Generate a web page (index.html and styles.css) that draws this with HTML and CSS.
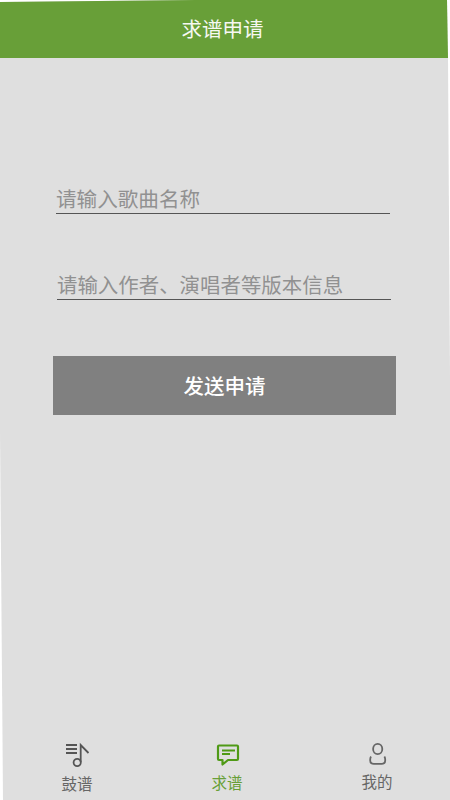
FILE: index.html
```html
<!DOCTYPE html>
<html lang="zh">
<head>
<meta charset="utf-8">
<title>求谱申请</title>
<link rel="stylesheet" href="styles.css">
</head>
<body>
<div class="app">
  <header class="topbar">求谱申请</header>
  <main class="form">
    <div class="field field-one">请输入歌曲名称</div>
    <div class="field field-two">请输入作者、演唱者等版本信息</div>
    <div class="submit">发送申请</div>
  </main>
  <nav class="tabs">
    <div class="tab">
      <svg class="icon" viewBox="0 0 24 24" fill="none" stroke="#555" stroke-width="1.8">
        <path d="M1 2h11M1 6h11M1 10h11"/>
        <path d="M15.700 19V2l7.800 8"/>
        <circle cx="12.200" cy="19.500" r="3.600"/>
      </svg>
      <span class="label">鼓谱</span>
    </div>
    <div class="tab tab-active">
      <svg class="icon" viewBox="0 0 24 24" fill="none" stroke="#4f9a16" stroke-width="2.2">
        <path d="M4 2.500h18a1 1 0 0 1 1 1V16a1 1 0 0 1-1 1H13l-5.500 4.500V17H4a1 1 0 0 1-1-1V3.500a1 1 0 0 1 1-1z" stroke-linejoin="round"/>
        <path d="M7 7.500h13M7 11h8" stroke-width="1.800"/>
      </svg>
      <span class="label">求谱</span>
    </div>
    <div class="tab tab-me">
      <svg class="icon" viewBox="0 0 24 24" fill="none" stroke="#666" stroke-width="1.800">
        <ellipse cx="12.700" cy="6" rx="4.600" ry="5.200"/>
        <path d="M6 13.500C5 15 5.200 16 5.200 17.500c0 2.200 1.500 3.300 3.500 3.300h8c2 0 3.500-1.100 3.500-3.300 0-1.500.2-2.500-.8-4"/>
      </svg>
      <span class="label">我的</span>
    </div>
  </nav>
</div>
</body>
</html>
```
FILE: styles.css
```css
* { box-sizing: border-box; }
html, body { margin: 0; padding: 0; }
body {
  width: 450px;
  height: 800px;
  overflow: hidden;
  background: #fff;
  font-family: "Noto Sans CJK SC", "Noto Sans", sans-serif;
}
.app {
  width: 450px;
  height: 800px;
  display: flex;
  flex-direction: column;
  background: #dfdfdf;
  clip-path: polygon(0 2px, 195px 0, 447px 0, 448px 58px, 450px 380px, 450px 800px, 3px 800px, 0 430px);
}
.topbar {
  height: 58px;
  flex: none;
  background: #689f38;
  color: #f6f8f2;
  font-size: 20.5px;
  line-height: 57px;
  padding-right: 5px;
  text-align: center;
}
.form {
  flex: 1;
  display: flex;
  flex-direction: column;
  padding: 125px 0 0 56px;
}
.field {
  width: 334px;
  height: 31px;
  border-bottom: 1.5px solid #555;
  color: #919191;
  font-size: 20.6px;
  line-height: 30px;
}
.field-two {
  margin-top: 55px;
  margin-left: 1px;
  font-size: 20.45px;
}
.submit {
  width: 343px;
  height: 59px;
  margin: 56px 0 0 -3px;
  background: #808080;
  color: #fff;
  font-size: 20.5px;
  font-weight: 500;
  line-height: 59px;
  text-align: center;
}
.tabs {
  height: 57px;
  flex: none;
  display: grid;
  grid-template-columns: repeat(3, 150px);
  padding-left: 2px;
}
.tab {
  display: flex;
  flex-direction: column;
  align-items: center;
  color: #666;
}
.icon {
  width: 24px;
  height: 24px;
  flex: none;
  overflow: visible;
}
.label {
  font-size: 15.5px;
  line-height: 22px;
  margin-top: 5px;
}
.tab-active { color: #689f38; }
.tab-active .label { margin-top: 4px; }
.tab-me .label { margin-top: 3px; }
```
